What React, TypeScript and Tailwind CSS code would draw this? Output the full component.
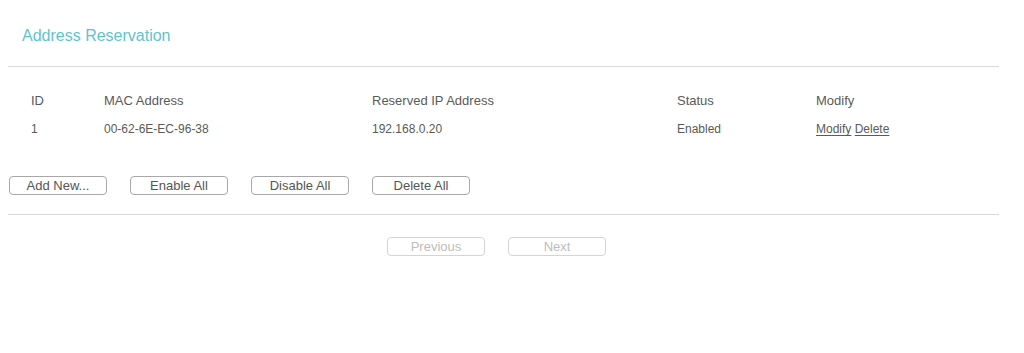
import clsx from 'clsx'

const rows = [
  { id: '1', mac: '00-62-6E-EC-96-38', ip: '192.168.0.20', status: 'Enabled' },
]

const actions = ['Add New...', 'Enable All', 'Disable All', 'Delete All']

function Btn({ label, disabled }: { label: string; disabled?: boolean }) {
  return (
    <button
      className={clsx(
        'h-[19px] w-[98px] rounded-[4px] border bg-white text-[13px] leading-none',
        disabled ? 'border-[#d4d4d4] text-[#bdbdbd]' : 'border-[#a8a8a8] text-[#555]'
      )}
    >
      {label}
    </button>
  )
}

export default function App() {
  return (
    <div className="h-[353px] w-[1024px] bg-white font-['Liberation_Sans',Arial,sans-serif] text-[13px] text-[#5a5a5a]">
      <div className="w-[999px] pl-2">
        <h1 className="pl-[14px] pt-[26px] text-[16px] leading-[20px] text-[#5fc3cf]">Address Reservation</h1>

        <div className="mt-[20px] h-px bg-[#d9d9d9]" />

        <div className="grid grid-cols-[73px_268px_305px_139px_1fr] pl-[23px] pt-[26px]">
          <div className="leading-[16px]">ID</div>
          <div className="leading-[16px]">MAC Address</div>
          <div className="leading-[16px]">Reserved IP Address</div>
          <div className="leading-[16px]">Status</div>
          <div className="leading-[16px]">Modify</div>
          {rows.map((r) => (
            <div key={r.id} className="contents text-[12px]">
              <div className="mt-[12px] leading-[16px]">{r.id}</div>
              <div className="mt-[12px] leading-[16px]">{r.mac}</div>
              <div className="mt-[12px] leading-[16px]">{r.ip}</div>
              <div className="mt-[12px] leading-[16px]">{r.status}</div>
              <div className="mt-[12px] leading-[16px]">
                <a className="underline underline-offset-2">Modify</a>{' '}
                <a className="underline underline-offset-2">Delete</a>
              </div>
            </div>
          ))}
        </div>

        <div className="mt-[39px] flex gap-[23px] pl-px">
          {actions.map((a) => (
            <Btn key={a} label={a} />
          ))}
        </div>

        <div className="mt-[19px] h-px bg-[#d9d9d9]" />

        <div className="mt-[22px] flex gap-[23px] pl-[379px]">
          <Btn label="Previous" disabled />
          <Btn label="Next" disabled />
        </div>
      </div>
    </div>
  )
}
